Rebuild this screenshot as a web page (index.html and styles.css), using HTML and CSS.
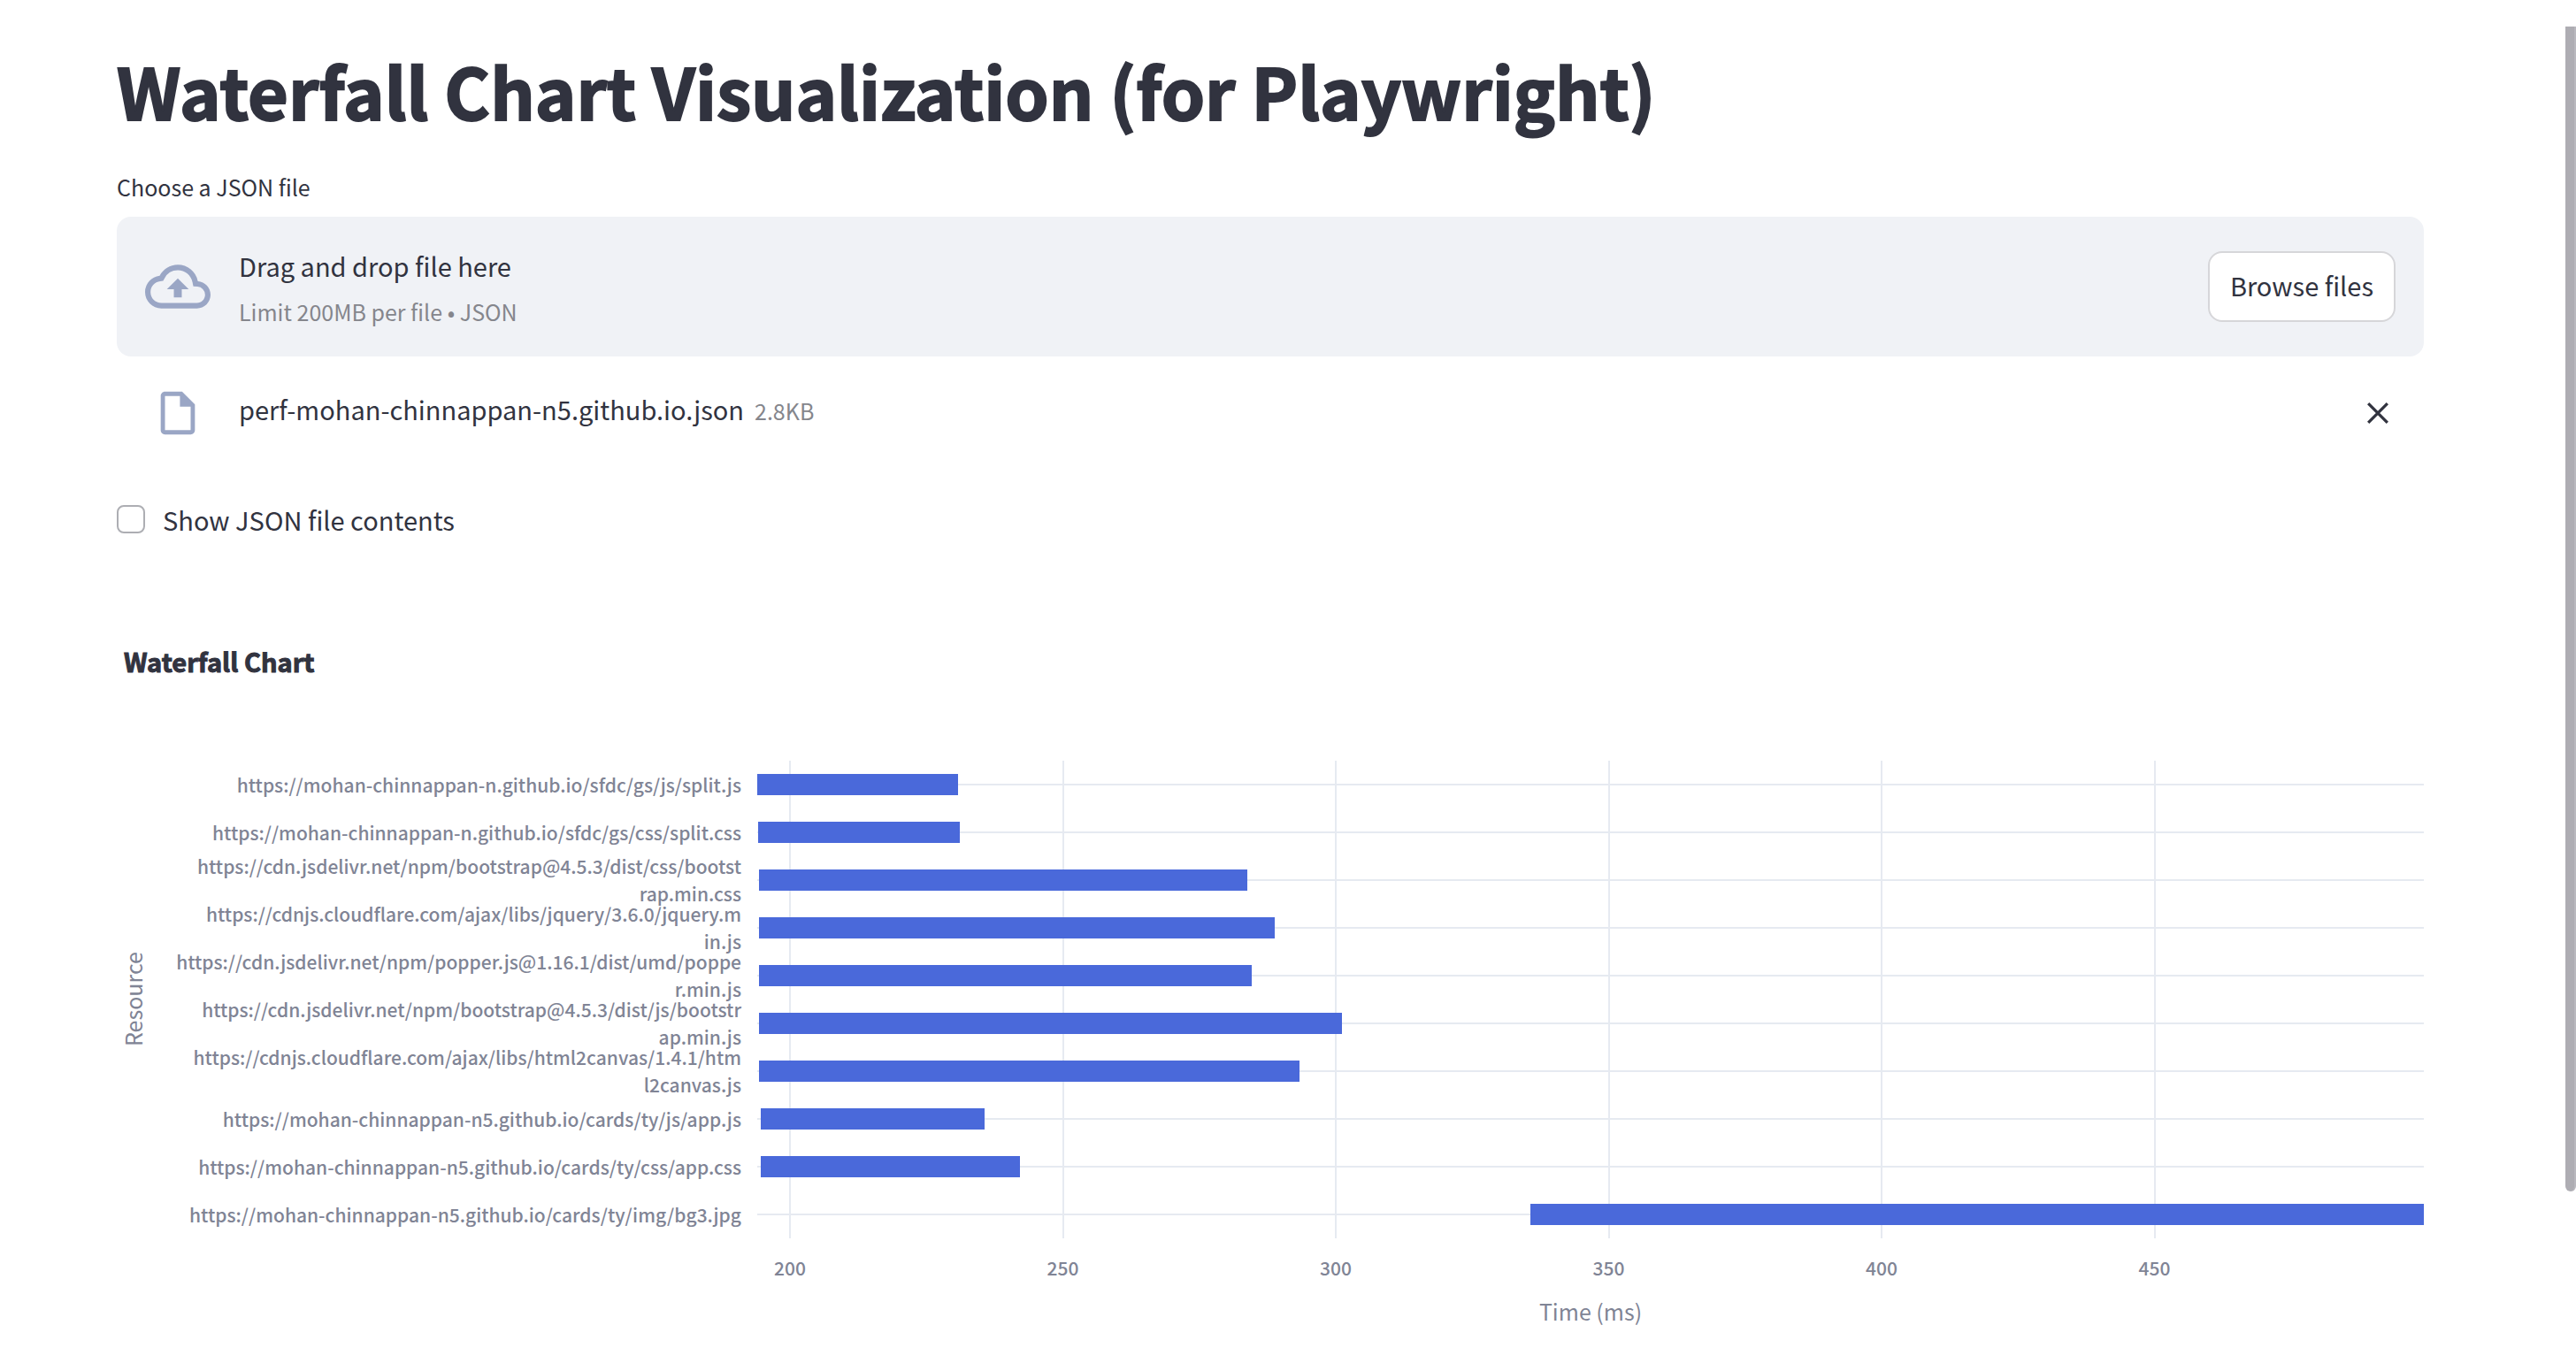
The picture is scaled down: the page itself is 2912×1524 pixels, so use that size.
FILE: index.html
```html
<!DOCTYPE html>
<html lang="en">
<head>
<meta charset="utf-8">
<title>Waterfall Chart Visualization</title>
<link rel="stylesheet" href="styles.css">
</head>
<body>
<main class="page">
  <h1 class="page-title">Waterfall Chart Visualization (for Playwright)</h1>

  <section class="uploader" aria-labelledby="uploader-label">
    <div class="uploader-label" id="uploader-label">Choose a JSON file</div>
    <div class="dropzone">
      <svg class="cloud-icon" viewBox="0 0 24 24" aria-hidden="true"><path d="M19.35 10.04A7.49 7.49 0 0012 4C9.11 4 6.6 5.64 5.35 8.04A5.994 5.994 0 000 14c0 3.31 2.69 6 6 6h13c2.76 0 5-2.24 5-5 0-2.64-2.05-4.78-4.65-4.96zM19 18H6c-2.21 0-4-1.79-4-4 0-2.05 1.53-3.76 3.56-3.97l1.07-.11.5-.95A5.469 5.469 0 0112 6c2.62 0 4.88 1.86 5.39 4.43l.3 1.5 1.53.11A2.98 2.98 0 0122 15c0 1.65-1.35 3-3 3zM8 13h2.55v3h2.9v-3H16l-4-4z"/></svg>
      <div class="dropzone-text">
        <div class="dropzone-title">Drag and drop file here</div>
        <div class="dropzone-hint">Limit 200MB per file • JSON</div>
      </div>
      <button class="browse" type="button">Browse files</button>
    </div>
    <div class="file">
      <div class="file-icon-cell">
        <svg class="file-icon" viewBox="0 0 24 24" aria-hidden="true"><path d="M14 2H6c-1.1 0-1.99.9-1.99 2L4 20c0 1.1.89 2 1.99 2H18c1.1 0 2-.9 2-2V8l-6-6zM6 20V4h7v5h5v11H6z"/></svg>
      </div>
      <div class="file-info">
        <span class="file-name">perf-mohan-chinnappan-n5.github.io.json</span>
        <span class="file-size">2.8KB</span>
      </div>
      <button class="remove" type="button" aria-label="Remove file">
        <svg class="remove-icon" viewBox="0 0 24 24" aria-hidden="true"><path d="M2 2l20 20M22 2L2 22"/></svg>
      </button>
    </div>
  </section>

  <label class="check"><input class="check-box" type="checkbox">Show JSON file contents</label>

  <section class="chart" aria-labelledby="chart-title">
    <h2 class="chart-title" id="chart-title">Waterfall Chart</h2>
    <div class="chart-grid">
      <div class="y-title">Resource</div>
      <div class="y-labels">
        <div class="y-label">https://mohan-chinnappan-n.github.io/sfdc/gs/js/split.js</div>
        <div class="y-label">https://mohan-chinnappan-n.github.io/sfdc/gs/css/split.css</div>
        <div class="y-label">https://cdn.jsdelivr.net/npm/bootstrap@4.5.3/dist/css/bootst<br>rap.min.css</div>
        <div class="y-label">https://cdnjs.cloudflare.com/ajax/libs/jquery/3.6.0/jquery.m<br>in.js</div>
        <div class="y-label">https://cdn.jsdelivr.net/npm/popper.js@1.16.1/dist/umd/poppe<br>r.min.js</div>
        <div class="y-label">https://cdn.jsdelivr.net/npm/bootstrap@4.5.3/dist/js/bootstr<br>ap.min.js</div>
        <div class="y-label">https://cdnjs.cloudflare.com/ajax/libs/html2canvas/1.4.1/htm<br>l2canvas.js</div>
        <div class="y-label">https://mohan-chinnappan-n5.github.io/cards/ty/js/app.js</div>
        <div class="y-label">https://mohan-chinnappan-n5.github.io/cards/ty/css/app.css</div>
        <div class="y-label">https://mohan-chinnappan-n5.github.io/cards/ty/img/bg3.jpg</div>
      </div>
      <div class="plot">
        <div class="row"><div class="bar" style="margin-left:0%;width:12.05%"></div></div>
        <div class="row"><div class="bar" style="margin-left:.05%;width:12.08%"></div></div>
        <div class="row"><div class="bar" style="margin-left:.08%;width:29.3%"></div></div>
        <div class="row"><div class="bar" style="margin-left:.11%;width:30.92%"></div></div>
        <div class="row"><div class="bar" style="margin-left:.11%;width:29.56%"></div></div>
        <div class="row"><div class="bar" style="margin-left:.13%;width:34.95%"></div></div>
        <div class="row"><div class="bar" style="margin-left:.13%;width:32.4%"></div></div>
        <div class="row"><div class="bar" style="margin-left:.2%;width:13.46%"></div></div>
        <div class="row"><div class="bar" style="margin-left:.2%;width:15.58%"></div></div>
        <div class="row"><div class="bar" style="margin-left:46.39%;width:53.61%"></div></div>
        <div class="tick-line" style="left:1.96%"></div>
        <div class="tick-line" style="left:18.34%"></div>
        <div class="tick-line" style="left:34.71%"></div>
        <div class="tick-line" style="left:51.09%"></div>
        <div class="tick-line" style="left:67.46%"></div>
        <div class="tick-line" style="left:83.84%"></div>
      </div>
      <div class="x-axis">
        <div class="x-ticks">
          <span class="x-tick" style="left:1.96%">200</span>
          <span class="x-tick" style="left:18.34%">250</span>
          <span class="x-tick" style="left:34.71%">300</span>
          <span class="x-tick" style="left:51.09%">350</span>
          <span class="x-tick" style="left:67.46%">400</span>
          <span class="x-tick" style="left:83.84%">450</span>
        </div>
        <div class="x-title">Time (ms)</div>
      </div>
    </div>
  </section>
</main>
<div class="scroll-thumb"></div>
</body>
</html>
```
FILE: styles.css
```css
:root {
  --text: #31333f;
  --muted: #808495;
  --faded: #85868c;
  --icon: #9aa6c5;
  --grid: #e6eaf1;
  --bar: #4a69da;
}

* { box-sizing: border-box; }

body {
  margin: 0;
  background: #fff;
  color: var(--text);
  font-family: "Noto Sans CJK JP", "Noto Sans CJK SC", "Noto Sans", sans-serif;
  font-size: 29px;
  line-height: 40px;
}

button { font: inherit; color: inherit; }

.page { padding: 49px 172px 24px 132px; }

.page-title {
  margin: 0 0 36px;
  font-size: 79px;
  line-height: 106px;
  font-weight: 700;
  -webkit-text-stroke: 2px var(--text);
}

.uploader-label { margin-bottom: 14px; font-size: 25px; }

.dropzone {
  display: flex;
  align-items: center;
  gap: 32px;
  padding: 27px 32px;
  border-radius: 16px;
  background: #f0f2f6;
}
.cloud-icon { width: 74px; height: 74px; fill: var(--icon); }
.dropzone-text { flex: 1; }
.dropzone-title { line-height: 56px; }
.dropzone-hint { font-size: 25px; line-height: 48px; color: var(--faded); }

.browse {
  height: 80px;
  padding: 0 23px 4px;
  border: 2px solid #d6d6d9;
  border-radius: 16px;
  background: #fff;
}

.file {
  display: flex;
  align-items: center;
  margin-top: 35px;
  padding: 0 32px;
}
.file-icon-cell { display: flex; justify-content: center; width: 74px; margin-right: 32px; }
.file-icon { width: 58px; height: 58px; fill: var(--icon); }
.file-info {
  display: flex;
  flex: 1;
  align-items: baseline;
  align-self: flex-start;
  gap: 12px;
  line-height: 48px;
}
.file-size { font-size: 25px; color: var(--faded); }

.remove {
  display: flex;
  align-items: center;
  justify-content: center;
  width: 40px;
  height: 40px;
  padding: 0;
  border: 0;
  background: none;
}
.remove-icon { width: 26px; height: 26px; fill: none; stroke: var(--text); stroke-width: 3; }

.check { display: flex; align-items: center; gap: 20px; width: max-content; margin-top: 71px; }
.check-box {
  appearance: none;
  width: 32px;
  height: 32px;
  margin: 0;
  border: 2px solid #adaeb3;
  border-radius: 8px;
  background: #fff;
}

.chart { margin-top: 120px; }
.chart-title {
  margin: 0 0 93px 8px;
  font-size: 29px;
  line-height: 40px;
  font-weight: 700;
  -webkit-text-stroke: 1px var(--text);
}

.chart-grid { display: grid; grid-template-columns: 36px 670px 1fr; }
.y-title {
  writing-mode: vertical-rl;
  transform: rotate(180deg);
  text-align: center;
  font-size: 25px;
  line-height: 36px;
  color: var(--muted);
}
.y-labels {
  display: grid;
  grid-auto-rows: 54px;
  color: var(--muted);
  font-size: 21px;
  font-weight: 500;
  line-height: 31px;
  text-align: right;
}
.y-label { display: grid; align-content: center; white-space: nowrap; }

.plot { position: relative; margin-left: 18px; }
.row {
  display: flex;
  align-items: center;
  height: 54px;
  background: linear-gradient(var(--grid), var(--grid)) center / 100% 2px no-repeat;
}
.bar { position: relative; z-index: 1; height: 24px; background: var(--bar); }
.tick-line { position: absolute; top: 0; bottom: 0; width: 2px; margin-left: -1px; background: var(--grid); }

.x-axis { grid-column: 3; margin-left: 18px; color: var(--muted); }
.x-ticks {
  position: relative;
  height: 32px;
  margin: 17px 0 13px;
  font-size: 21px;
  font-weight: 500;
  line-height: 32px;
}
.x-tick { position: absolute; transform: translateX(-50%); }
.x-title { font-size: 25px; text-align: center; }

.scroll-thumb {
  position: absolute;
  top: 30px;
  right: 0;
  width: 12px;
  height: 86.4vh;
  border-right: 2px solid #b9b8be;
  border-radius: 0 0 6px 6px;
  background: #aeadb3;
}
```
